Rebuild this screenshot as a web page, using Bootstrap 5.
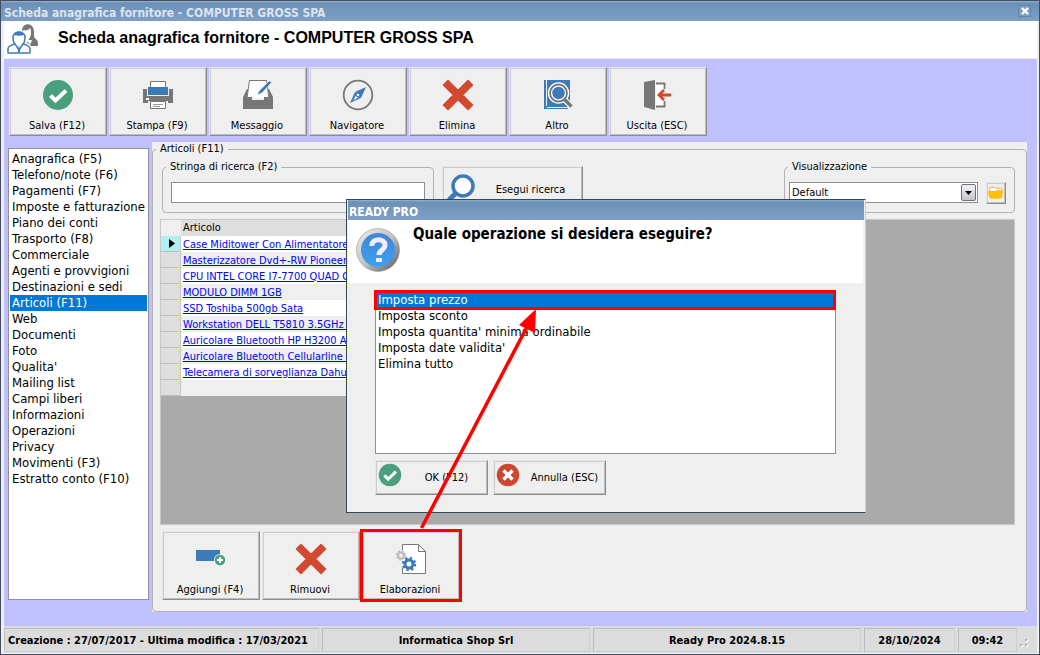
<!DOCTYPE html>
<html lang="it">
<head>
<meta charset="utf-8">
<meta name="viewport" content="width=device-width, initial-scale=1">
<title>Scheda anagrafica fornitore - COMPUTER GROSS SPA</title>
<link href="https://cdn.jsdelivr.net/npm/bootstrap@5.3.0/dist/css/bootstrap.min.css" rel="stylesheet">
<style>
  body { font: 11px/14px "DejaVu Sans Condensed", "DejaVu Sans", sans-serif; color: #000; }
  .app-window { border: 1px solid #434d5f; background: #efeff2; }
  .title-bar { height: 20px; background: linear-gradient(#9ab3d2, #6b91b9 2px, #7e9fc5); font-size: 12px; font-weight: bold; color: #dde4ee; padding: 4px 4px 0 3px; }
  .close-btn { width: 13px; height: 12px; border: 1px solid #6484ab; background: #7f9dc1; line-height: 0; }
  .frame { margin: 0 2px 1px 3px; }
  .page-head { height: 38px; background: #fff; border-bottom: 1px solid #e9e9ee; padding-left: 3px; }
  .page-head h1 { font: bold 16px/20px "Liberation Sans", Arial, sans-serif; margin: -3px 0 0 19px; }
  .work-area { background: #c0c0ff; padding: 8px 10px 14px 5px; }
  .tool-btn { width: 98px; height: 69px; }
  .tool-btn > svg { margin-bottom: 8px; }
  .tool-btn > span { margin: 0 2px 2px 0; }
  .raised { background: #efefef; color: #000; border: 1px solid; border-color: #e6e6ec #8c8c8c #8c8c8c #e6e6ec; box-shadow: inset 1px 1px 0 #cbcbd2, inset -1px -1px 0 #bdbdbd; padding: 0; }
  .nav-list { width: 141px; margin: 6px 3px 12px -1px; border: 1px solid #919191; background: #fff; padding: 2px 1px; }
  .text-row { display: block; width: 100%; padding: 0 2px; border: 0; background: none; font-size: 13px; line-height: 16px; text-align: left; color: #000; text-decoration: none; white-space: nowrap; }
  .text-row.current { background: #0078d7; color: #fff; }
  .panel { background: #efefef; min-width: 0; }
  .group { border: 1px solid #b2b2b2; border-radius: 4px; min-width: 0; }
  .group > legend { float: none; width: auto; margin: 0 0 0 3px; padding: 0 4px; font-size: 11px; line-height: 14px; }
  .group-main { padding: 4px 11px 11px 7px; }
  .group-main > legend { margin-left: -4px; }
  .search-group { width: 272px; height: 53px; }
  .view-group { width: 231px; height: 53px; }
  .field { height: 21px; border: 1px solid #8f8f8f; background: #fff; font-size: 11px; padding: 0 2px; appearance: none; border-radius: 0; color: #000; }
  .search-btn { width: 141px; height: 40px; margin-top: 6px; }
  .drop-mark { right: 2px; top: 2px; width: 15px; height: 17px; border: 1px solid #707078; border-radius: 2px; background: linear-gradient(#f2f2f5, #c4c5cf); pointer-events: none; }
  .data-area { background: #aaa; border: 1px solid #c8c8cc; min-height: 0; margin-top: 6px; }
  .items { width: 420px; table-layout: fixed; border-collapse: separate; border-spacing: 0; }
  .items th, .items td { height: 16px; padding: 0 2px; line-height: 16px; font-weight: normal; white-space: nowrap; overflow: hidden; }
  .items thead th { background: #dedede; }
  .items thead th:first-child { background: #efefef; }
  .items tbody th { background: #dedede; border-right: 1px solid #c8c8cc; border-bottom: 1px solid #c0c0c4; text-align: right; line-height: 0; }
  .items tbody td { line-height: 15px; }
  .items tbody tr { background: #fff; }
  .items tbody tr:nth-child(even) { background: #efefef; }
  .items tbody th.active-row { background: #b0f0f0; padding-right: 5px; }
  .items a { color: #00f; text-underline-offset: 1px; }
  .marked { outline: 3px solid #f00; outline-offset: -1px; }
  .status { height: 27px; background: #dcdcdc; padding: 2px 9px 1px 0; font-weight: bold; gap: 3px; }
  .status > div { border: 1px solid; border-color: #bcbcbc #cfcfd4 #cfcfd4 #bcbcbc; line-height: 23px; text-align: center; white-space: nowrap; }
  .status > .w-created { width: 315px; text-align: left; padding-left: 3px; }
  .w-date { width: 91px; } .w-time { width: 59px; }
  .dialog-win { left: 345px; top: 198px; width: 520px; background: #efefef; border: 1px solid #33475f; border-right-color: #c9d1db; padding: 0 1px 1px 1px; }
  .dialog-win .title-bar { color: #fff; padding-left: 1px; }
  .dialog-head { background: #fff; height: 63px; padding: 7px 8px; margin-right: 1px; }
  .dialog-head h2 { font-size: 15px; line-height: 18px; font-weight: bold; margin: -2px 0 0 13px; }
  .dialog-body { padding: 8px 28px 16px 27px; }
  .choices { height: 163px; background: #fff; border: 1px solid #919191; padding-right: 1px; }
  .dlg-btn { width: 113px; height: 35px; }
  .dlg-btn svg { margin: -5px 0 0 2px; }
  .pointer { left: 414px; top: 304px; pointer-events: none; }
  svg { display: block; flex: none; }
</style>
</head>
<body>
<svg width="0" height="0" class="position-absolute" aria-hidden="true">
  <defs>
    <symbol id="i-check" viewBox="0 0 32 32"><circle cx="16" cy="16" r="15" fill="#4a9f7c"/><path d="M8.500 16.500l5 5 10.500-10" fill="none" stroke="#fff" stroke-width="4"/></symbol>
    <symbol id="i-cross" viewBox="0 0 32 32"><path d="M6 1.500L16 11.500 26 1.500 30.500 6 20.500 16 30.500 26 26 30.500 16 20.500 6 30.500 1.500 26 11.500 16 1.500 6z" fill="#d14a30" stroke="#d14a30" stroke-width="1.600" stroke-linejoin="round"/></symbol>
    <symbol id="i-stop" viewBox="0 0 32 32"><circle cx="16" cy="16" r="15" fill="#cc472f"/><path d="M10 10l12 12M22 10L10 22" stroke="#fff" stroke-width="4.500"/></symbol>
  </defs>
</svg>

<div class="app-window d-flex flex-column min-vh-100 position-relative">
  <header class="title-bar d-flex align-items-center justify-content-between">
    <span>Scheda anagrafica fornitore - COMPUTER GROSS SPA</span>
    <button type="button" class="close-btn p-0 mb-1 me-1 d-flex align-items-center justify-content-center" aria-label="Chiudi"><svg width="8" height="8" viewBox="0 0 8 8"><path d="M1 1l6 6M7 1L1 7" stroke="#fff" stroke-width="2.400"/></svg></button>
  </header>

  <div class="frame d-flex flex-column flex-grow-1">
    <div class="page-head d-flex align-items-center">
      <svg width="32" height="32" viewBox="0 0 32 32">
        <path d="M15 7c0-9 12-9 12 1 0 5 0 6 3 8 1 1 1 4 1 6H20z" fill="#777"/>
        <path d="M16 6c2 1 6 0 7-2 2 3 1 9-1 11l-2 4-4-7z" fill="#fff"/><path d="M20 16l3 5 2-5z" fill="#fff"/>
        <path d="M1 29v-4c0-3 3-4 6-5-1-1-1-3-1-5v-2c0-6 12-6 12 0v2c0 2 0 4-1 5 3 1 6 2 6 5v4z" fill="#fff" stroke="#fff" stroke-width="4"/>
        <path d="M1 29v-4c0-3 3-4 7-5-2-2-2-4-2-7 0-6 12-6 12 0 0 3 0 5-2 7 4 1 7 2 7 5v4zM8 20l4 6 4-6" fill="#fff" stroke="#3d7cbc" stroke-width="1.500" stroke-linejoin="round"/>
        <path d="M5.500 14C5 5 19 5 18.500 14l-1.500-3c-3 1-7 1-10 0zM12 21l-1.300 7h2.600z" fill="#3d7cbc"/>
      </svg>
      <h1>Scheda anagrafica fornitore - COMPUTER GROSS SPA</h1>
    </div>

    <div class="work-area d-flex flex-column flex-grow-1">
      <div class="d-flex" style="gap:2px" role="toolbar">
        <button type="button" class="raised tool-btn d-flex flex-column align-items-center justify-content-end"><svg width="32" height="32"><use href="#i-check"/></svg><span>Salva (F12)</span></button>
        <button type="button" class="raised tool-btn d-flex flex-column align-items-center justify-content-end">
          <svg width="32" height="32" viewBox="0 0 32 32"><path d="M1 10h30v14H1z" fill="#777"/><path d="M5 10V8h22v2z" fill="#efefef"/><path d="M8.500 8V2.500h15V8" fill="#fff" stroke="#777"/><path d="M5 8h22v9H5z" fill="#efefef"/><path d="M6 8h20v8H6z" fill="#3d7ab8"/><path d="M4 19h3v2H4z" fill="#fff"/><path d="M6 22h2v2H6zM24 22h2v2h-2z" fill="#efefef"/><path d="M8.500 22.500h15v7h-15z" fill="#fff" stroke="#777"/><path d="M11 25.500h10M11 27.500h7" stroke="#999"/></svg><span>Stampa (F9)</span></button>
        <button type="button" class="raised tool-btn d-flex flex-column align-items-center justify-content-end">
          <svg width="32" height="32" viewBox="0 0 32 32"><path d="M1 18l4-8h3v8zM31 18l-4-8h-3v8z" fill="#777"/><path d="M5 19L7.500 1.500h17L27 19" fill="#fff" stroke="#777"/><path d="M1 18h9v3h12v-3h9v12H1z" fill="#777"/><path d="M15 16l2-4L27 2l3 1-10 11z" fill="#3d7ab8" stroke="#fff" stroke-width=".6"/></svg><span>Messaggio</span></button>
        <button type="button" class="raised tool-btn d-flex flex-column align-items-center justify-content-end">
          <svg width="32" height="32" viewBox="0 0 32 32"><circle cx="16" cy="16" r="14.300" fill="none" stroke="#777" stroke-width="1.800"/><path d="M24 8l-5 11-3-3-3-3z" fill="#3d7ab8"/><path d="M8 24l5-11 6 6z" fill="#3d7ab8"/><path d="M11 21.500l3-5 2 2z" fill="#fff"/><circle cx="16" cy="16" r="1.800" fill="#fff" stroke="#3d7ab8"/></svg><span>Navigatore</span></button>
        <button type="button" class="raised tool-btn d-flex flex-column align-items-center justify-content-end"><svg width="32" height="32"><use href="#i-cross"/></svg><span>Elimina</span></button>
        <button type="button" class="raised tool-btn d-flex flex-column align-items-center justify-content-end">
          <svg width="32" height="32" viewBox="0 0 32 32"><path d="M2 1h26v27H5v1h21v1H2z" fill="#3d7ab8"/><path d="M4.500 1v26" stroke="#efefef"/><circle cx="16.500" cy="14" r="8.500" fill="#3d7ab8" stroke="#fff" stroke-width="4.500"/><path d="M22 20l7 7" stroke="#fff" stroke-width="6"/><circle cx="16.500" cy="14" r="8.500" fill="none" stroke="#777" stroke-width="1.800"/><path d="M22.500 20.500l7 7" stroke="#777" stroke-width="3.500"/></svg><span>Altro</span></button>
        <button type="button" class="raised tool-btn d-flex flex-column align-items-center justify-content-end">
          <svg width="32" height="32" viewBox="0 0 32 32"><path d="M14 4.500h8.500v23H14" fill="#fff" stroke="#777" stroke-width="1.800"/><path d="M21 10h4v12h-4z" fill="#efefef"/><path d="M2 3l11-2v30L2 28z" fill="#777"/><path d="M29 16H17M22 11l-5 5 5 5" fill="none" stroke="#d14a30" stroke-width="2.800"/></svg><span>Uscita (ESC)</span></button>
      </div>

      <div class="d-flex flex-grow-1" style="margin-top:6px">
        <nav class="nav-list flex-shrink-0">
          <a class="text-row" href="#">Anagrafica (F5)</a>
          <a class="text-row" href="#">Telefono/note (F6)</a>
          <a class="text-row" href="#">Pagamenti (F7)</a>
          <a class="text-row" href="#">Imposte e fatturazione</a>
          <a class="text-row" href="#">Piano dei conti</a>
          <a class="text-row" href="#">Trasporto (F8)</a>
          <a class="text-row" href="#">Commerciale</a>
          <a class="text-row" href="#">Agenti e provvigioni</a>
          <a class="text-row" href="#">Destinazioni e sedi</a>
          <a class="text-row current" href="#" aria-current="page">Articoli (F11)</a>
          <a class="text-row" href="#">Web</a>
          <a class="text-row" href="#">Documenti</a>
          <a class="text-row" href="#">Foto</a>
          <a class="text-row" href="#">Qualita'</a>
          <a class="text-row" href="#">Mailing list</a>
          <a class="text-row" href="#">Campi liberi</a>
          <a class="text-row" href="#">Informazioni</a>
          <a class="text-row" href="#">Operazioni</a>
          <a class="text-row" href="#">Privacy</a>
          <a class="text-row" href="#">Movimenti (F3)</a>
          <a class="text-row" href="#">Estratto conto (F10)</a>
        </nav>

        <div class="panel flex-grow-1 d-flex">
          <fieldset class="group group-main flex-grow-1 d-flex flex-column">
            <legend>Articoli (F11)</legend>
            <div class="d-flex" style="margin-left:2px">
              <fieldset class="group search-group">
                <legend><label for="q">Stringa di ricerca (F2)</label></legend>
                <div class="mt-2 px-2"><input id="q" type="text" class="field w-100"></div>
              </fieldset>
              <button type="button" class="raised search-btn ms-2 d-flex align-items-center">
                <svg width="32" height="32" viewBox="0 0 32 32" class="ms-1 mt-1"><circle cx="16" cy="14" r="10" fill="#fff" stroke="#3d7ab8" stroke-width="3.500"/><path d="M9 21l-8 8" stroke="#3d7ab8" stroke-width="5"/></svg>
                <span class="flex-grow-1 pt-2">Esegui ricerca</span>
              </button>
              <fieldset class="group view-group ms-auto">
                <legend><label for="view">Visualizzazione</label></legend>
                <div class="d-flex mt-2 px-1 gap-1 align-items-start">
                  <div class="position-relative flex-grow-1 me-1">
                    <select id="view" class="field w-100"><option>Default</option></select>
                    <span class="drop-mark position-absolute d-flex align-items-center justify-content-center"><svg width="7" height="4" viewBox="0 0 7 4"><path d="M0 0h7L3.500 4z"/></svg></span>
                  </div>
                  <button type="button" class="raised me-1" style="height:22px" aria-label="Apri"><svg width="18" height="18" viewBox="0 0 19 18"><path d="M3 3h5l1 1h7v5H3z" fill="#fff" stroke="#f5a45c"/><path d="M1 7h7l2-1h7l-1 7-2 2H4l-2-2z" fill="#fdc008"/></svg></button>
                </div>
              </fieldset>
            </div>

            <div class="data-area flex-grow-1">
              <table class="items">
                <colgroup><col style="width:20px"><col></colgroup>
                <thead><tr><th></th><th>Articolo</th></tr></thead>
                <tbody>
                  <tr><th class="active-row"><svg width="6" height="9" viewBox="0 0 6 9" class="ms-auto"><path d="M0 0l6 4.500L0 9z"/></svg></th><td><a href="#">Case Miditower Con Alimentatore</a></td></tr>
                  <tr><th></th><td><a href="#">Masterizzatore Dvd+-RW Pioneer</a></td></tr>
                  <tr><th></th><td><a href="#">CPU INTEL CORE I7-7700 QUAD CORE</a></td></tr>
                  <tr><th></th><td><a href="#">MODULO DIMM 1GB</a></td></tr>
                  <tr><th></th><td><a href="#">SSD Toshiba 500gb Sata</a></td></tr>
                  <tr><th></th><td><a href="#">Workstation DELL T5810 3.5GHz E5</a></td></tr>
                  <tr><th></th><td><a href="#">Auricolare Bluetooth HP H3200 Aqua</a></td></tr>
                  <tr><th></th><td><a href="#">Auricolare Bluetooth Cellularline Grigio</a></td></tr>
                  <tr><th></th><td><a href="#">Telecamera di sorveglianza Dahua</a></td></tr>
                  <tr><th></th><td></td></tr>
                </tbody>
              </table>
            </div>

            <div class="d-flex" style="gap:2px;margin:6px 0 0 2px">
              <button type="button" class="raised tool-btn d-flex flex-column align-items-center justify-content-end">
                <svg width="32" height="32" viewBox="0 0 32 32"><path d="M1 7h24v11H1z" fill="#3d7ab8"/><circle cx="25" cy="17" r="6" fill="#efefef"/><circle cx="25" cy="17" r="5.200" fill="#4a9f7c"/><path d="M25 14v6M22 17h6" stroke="#fff" stroke-width="2"/></svg><span>Aggiungi (F4)</span></button>
              <button type="button" class="raised tool-btn d-flex flex-column align-items-center justify-content-end"><svg width="32" height="32"><use href="#i-cross"/></svg><span>Rimuovi</span></button>
              <button type="button" class="raised tool-btn marked d-flex flex-column align-items-center justify-content-end">
                <svg width="32" height="32" viewBox="0 0 32 32"><path d="M7.500 1.500h16l7 7v22h-23z" fill="#fff" stroke="#777"/><path d="M23.500 1.500v7h7" fill="none" stroke="#777"/><path d="M6 7h3v15H6z" fill="#efefef"/><circle cx="6" cy="12.500" r="3" fill="#efefef" stroke="#bbb" stroke-width="2"/><circle cx="6" cy="12.500" r="4.500" fill="none" stroke="#bbb" stroke-width="1.600" stroke-dasharray="1.770 1.770"/><circle cx="14" cy="21" r="7.500" fill="#fff"/><circle cx="14" cy="21" r="4" fill="#fff" stroke="#3d7ab8" stroke-width="3"/><circle cx="14" cy="21" r="6" fill="none" stroke="#3d7ab8" stroke-width="2.400" stroke-dasharray="2.356 2.356"/></svg><span>Elaborazioni</span></button>
            </div>
          </fieldset>
        </div>
      </div>
    </div>

    <footer class="status d-flex">
      <div class="w-created">Creazione : 27/07/2017 - Ultima modifica : 17/03/2021</div>
      <div class="col">Informatica Shop Srl</div>
      <div class="col">Ready Pro 2024.8.15</div>
      <div class="w-date">28/10/2024</div>
      <div class="w-time">09:42</div>
      <svg width="8" height="10" viewBox="0 0 8 10" class="align-self-end mb-1"><path d="M5 1h2v2H5zM0 6h2v2H0zM5 6h2v2H5z" fill="#b0b0b0"/><path d="M7 2h1v2H6zM2 7h1v2H1zM7 7h1v2H6z" fill="#fff"/></svg>
    </footer>
  </div>

  <section class="dialog-win position-absolute" role="dialog" aria-labelledby="ask">
    <div class="title-bar d-flex align-items-center">READY PRO</div>
    <div class="dialog-head d-flex">
      <svg width="44" height="46" viewBox="0 0 44 46">
        <defs><linearGradient id="rim" x1="0" y1="0" x2="1" y2="1"><stop offset="0" stop-color="#eee"/><stop offset=".5" stop-color="#c4c4c4"/><stop offset="1" stop-color="#555"/></linearGradient><linearGradient id="glass" x1="0" y1="0" x2="0" y2="1"><stop offset="0" stop-color="#3f86d6"/><stop offset="1" stop-color="#3da0f2"/></linearGradient></defs>
        <circle cx="22" cy="23" r="21.500" fill="url(#rim)" stroke="#999" stroke-width=".6"/><circle cx="22" cy="23" r="17" fill="url(#glass)"/>
        <path d="M16 19c-1-8 13-8 13-1 0 5-6 5-6 10" fill="none" stroke="#f2ecfc" stroke-width="5"/><path d="M20 31h6v4h-6z" fill="#f2ecfc"/>
      </svg>
      <h2 id="ask">Quale operazione si desidera eseguire?</h2>
    </div>
    <div class="dialog-body">
      <div class="choices" role="listbox">
        <button type="button" role="option" aria-selected="true" class="text-row current marked">Imposta prezzo</button>
        <button type="button" role="option" class="text-row">Imposta sconto</button>
        <button type="button" role="option" class="text-row">Imposta quantita' minima ordinabile</button>
        <button type="button" role="option" class="text-row">Imposta date validita'</button>
        <button type="button" role="option" class="text-row">Elimina tutto</button>
      </div>
      <div class="d-flex" style="gap:5px;margin-top:6px">
        <button type="button" class="raised dlg-btn d-flex align-items-center"><svg width="24" height="24"><use href="#i-check"/></svg><span class="flex-grow-1 ps-1">OK (F12)</span></button>
        <button type="button" class="raised dlg-btn d-flex align-items-center"><svg width="24" height="24"><use href="#i-stop"/></svg><span class="flex-grow-1 ps-1">Annulla (ESC)</span></button>
      </div>
    </div>
  </section>

  <svg class="pointer position-absolute" width="125" height="225" viewBox="415 305 125 225" aria-hidden="true">
    <path d="M421.500 528L528 325" stroke="#f00" stroke-width="3.500"/><path d="M536 309l-17 16 16 8z" fill="#f00"/>
  </svg>
</div>
<script src="https://cdn.jsdelivr.net/npm/bootstrap@5.3.0/dist/js/bootstrap.bundle.min.js"></script>
</body>
</html>
